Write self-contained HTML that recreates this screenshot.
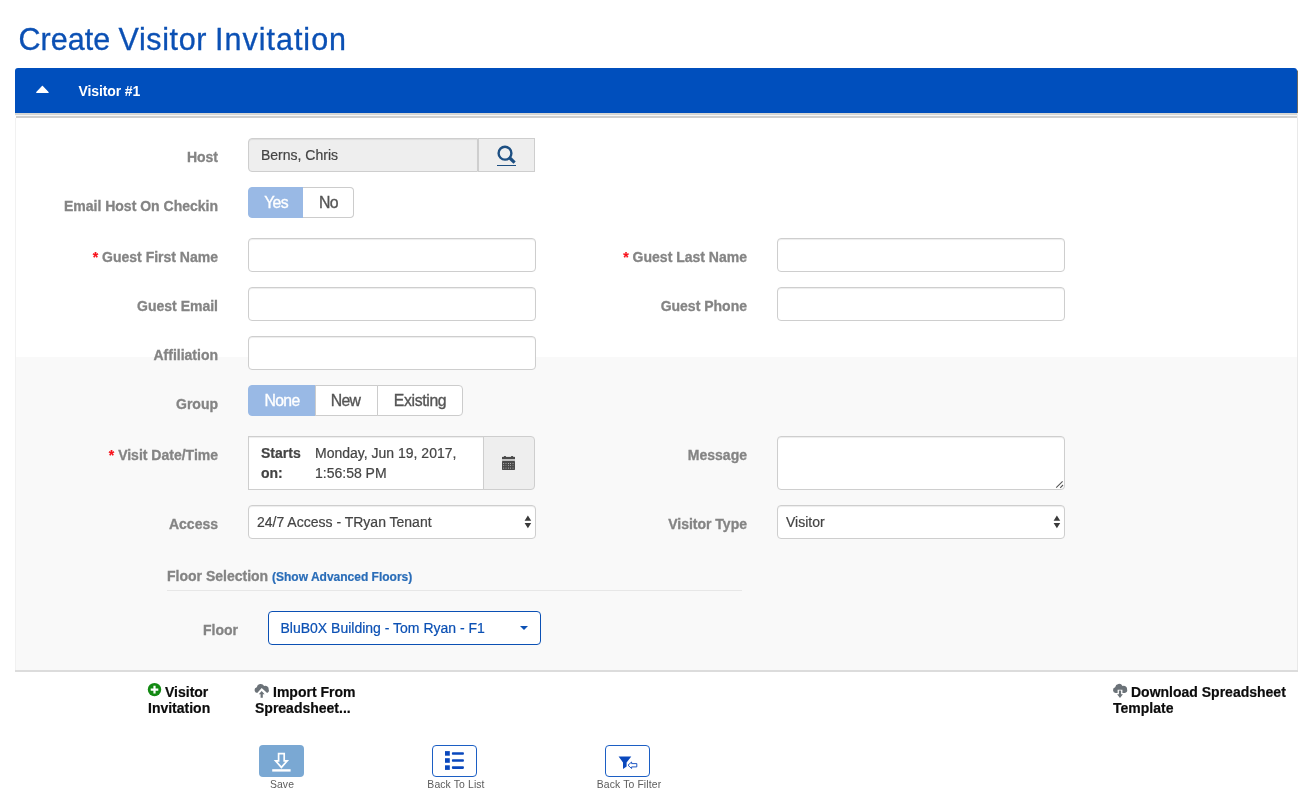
<!DOCTYPE html>
<html>
<head>
<meta charset="utf-8">
<title>Create Visitor Invitation</title>
<style>
*{box-sizing:border-box;margin:0;padding:0}
html,body{width:1298px;height:795px;overflow:hidden;background:#fff}
body{font-family:"Liberation Sans",sans-serif;font-size:14px;color:#333;position:relative}
.abs{position:absolute}
h1{position:absolute;left:18.4px;top:18.7px;font-size:30.5px;-webkit-text-stroke:0.3px #0b50b4;font-weight:normal;color:#0b50b4;line-height:40px;white-space:nowrap;letter-spacing:0.75px}
.hdr{position:absolute;left:15px;top:68px;width:1282px;height:45px;background:#004fbd;border-radius:3px 3px 0 0}
.hdr .t{position:absolute;left:63.5px;top:15px;font-size:14px;font-weight:bold;color:#fff;line-height:16px;letter-spacing:-0.12px}
.panel{position:absolute;left:15px;top:118px;width:1283px;height:552px;background:#fff;border-left:1px solid #f1f1f1;border-right:1px solid #e9e9e9}
.gray{position:absolute;left:16px;top:357px;width:1281px;height:313px;background:#f9f9f9}
.pb{position:absolute;left:15px;top:670px;width:1283px;height:2px;background:#dcdcdc}
.lbl{position:absolute;font-weight:bold;font-size:14px;color:#848484;-webkit-text-stroke:0.3px #848484;text-align:right;line-height:16px;white-space:nowrap}
.lbl i{color:#f8121c;-webkit-text-stroke:0.2px #f8121c;font-style:normal}
.inp{position:absolute;height:34px;background:#fff;border:1px solid #cecece;border-radius:4px;box-shadow:inset 0 1px 1px rgba(0,0,0,.075)}
.txt{position:absolute;font-size:14px;color:#444;-webkit-text-stroke:0.2px currentColor;line-height:16px;white-space:nowrap}

.btn{position:absolute;height:31px;border:1px solid #ccc;background:#fff;font-size:15.8px;color:#555;text-align:center;line-height:29px;letter-spacing:-0.7px;-webkit-text-stroke:0.35px currentColor}
.btn.on{background:#99b9e5;border-color:#99b9e5;color:#fff}
.blk{position:absolute;font-weight:bold;font-size:14px;color:#0c0c0c;-webkit-text-stroke:0.2px #0c0c0c;line-height:16px;white-space:nowrap}
.cap{position:absolute;font-size:10.4px;letter-spacing:0.12px;color:#5c5c5c;line-height:12px;text-align:center;white-space:nowrap;width:100px}
.tb{position:absolute;top:745px;width:45px;height:32px;border-radius:4px}
.tb.o{border:1.4px solid #1c5fc4;background:#fff}
svg{position:absolute;overflow:visible}
h1 span{position:absolute;top:0}
</style>
</head>
<body>
<div id="w" style="position:absolute;left:0;top:0;width:1298px;height:795px;will-change:transform">
<h1><span style="left:0px;letter-spacing:0.05px">Create</span><span style="left:100.2px;letter-spacing:0.6px">Visitor</span><span style="left:196.6px;letter-spacing:1.0px">Invitation</span></h1>
<div class="hdr"><svg style="left:0;top:0" width="60" height="45" viewBox="15 68 60 45"><path d="M36.7 92.4 L48.1 92.4 L42.4 86.3 Z" fill="#fff" stroke="#fff" stroke-width="1.2" stroke-linejoin="round"/></svg><div class="t">Visitor #1</div></div>
<svg style="left:0;top:0" width="1298" height="120" viewBox="0 0 1298 120"><rect x="15" y="113" width="1282" height="2" fill="#d6d6d3"/><rect x="15" y="115" width="1282" height="1" fill="#f7f7f7"/><rect x="16" y="116" width="1281" height="2" fill="#cecece"/><rect x="1297" y="70.5" width="1" height="42.5" fill="#6e695f"/><rect x="1297" y="113" width="1" height="5" fill="#eee"/></svg>
<div class="panel"></div>
<div class="gray"></div>
<div class="pb"></div>

<!-- labels left -->
<div class="lbl" style="right:1080px;top:149px">Host</div>
<div class="lbl" style="right:1080px;top:198px">Email Host On Checkin</div>
<div class="lbl" style="right:1080px;top:249px"><i>*</i> Guest First Name</div>
<div class="lbl" style="right:1080px;top:298px">Guest Email</div>
<div class="lbl" style="right:1080px;top:347px">Affiliation</div>
<div class="lbl" style="right:1080px;top:396px">Group</div>
<div class="lbl" style="right:1080px;top:447px"><i>*</i> Visit Date/Time</div>
<div class="lbl" style="right:1080px;top:516px">Access</div>
<!-- labels right -->
<div class="lbl" style="right:551px;top:249px"><i>*</i> Guest Last Name</div>
<div class="lbl" style="right:551px;top:298px">Guest Phone</div>
<div class="lbl" style="right:551px;top:447px">Message</div>
<div class="lbl" style="right:551px;top:516px">Visitor Type</div>

<!-- host -->
<div class="inp" style="left:248px;top:138px;width:230px;background:#eee;border-radius:4px 0 0 4px"></div>
<div class="txt" style="left:261px;top:147px">Berns, Chris</div>
<div class="inp" style="left:478px;top:138px;width:57px;background:#eee;border-radius:0;box-shadow:none"></div>

<!-- inputs -->
<div class="inp" style="left:248px;top:238px;width:288px"></div>
<div class="inp" style="left:777px;top:238px;width:288px"></div>
<div class="inp" style="left:248px;top:287px;width:288px"></div>
<div class="inp" style="left:777px;top:287px;width:288px"></div>
<div class="inp" style="left:248px;top:336px;width:288px"></div>
<div class="inp" style="left:777px;top:436px;width:288px;height:54px"></div>
<div class="inp" style="left:248px;top:505px;width:288px"></div>
<div class="txt" style="left:257px;top:514px">24/7 Access - TRyan Tenant</div>
<div class="inp" style="left:777px;top:505px;width:288px"></div>
<div class="txt" style="left:786px;top:514px">Visitor</div>

<!-- search icon -->
<svg style="left:495px;top:143px" width="24" height="26" viewBox="495 143 24 26"><circle cx="505" cy="153.2" r="6.4" fill="none" stroke="#1d4f82" stroke-width="2.4"/><line x1="509.8" y1="158" x2="514.6" y2="162.6" stroke="#1d4f82" stroke-width="3.2" stroke-linecap="butt"/><rect x="497" y="165" width="19" height="1" fill="#1d4f82"/></svg>

<!-- yes/no -->
<div class="btn on" style="left:248px;top:187px;width:56px;border-radius:4px 0 0 4px">Yes</div>
<div class="btn" style="left:303px;top:187px;width:51px;border-radius:0 4px 4px 0;border-left:none;text-indent:1px">No</div>

<!-- group -->
<div class="btn on" style="left:248px;top:385px;width:68px;border-radius:4px 0 0 4px">None</div>
<div class="btn" style="left:315px;top:385px;width:63px;border-radius:0;text-indent:-2px">New</div>
<div class="btn" style="left:377px;top:385px;width:86px;border-radius:0 4px 4px 0;letter-spacing:-0.35px">Existing</div>

<!-- visit date/time -->
<div class="inp" style="left:248px;top:436px;width:236px;height:54px;border-radius:0"></div>
<div class="inp" style="left:483px;top:436px;width:52px;height:54px;background:#eee;border-radius:0 4px 4px 0;box-shadow:none"></div>
<div class="txt" style="left:261px;top:443px;font-weight:bold;line-height:20px;color:#444">Starts<br>on:</div>
<div class="txt" style="left:315px;top:443px;line-height:20px;color:#444">Monday, Jun 19, 2017,<br>1:56:58 PM</div>
<svg style="left:502px;top:455px" width="13" height="15" viewBox="0 0 13 15"><rect x="1.7" y="0.9" width="2.4" height="2.2" rx="1" fill="#4a4a4a"/><rect x="8.9" y="0.9" width="2.4" height="2.2" rx="1" fill="#4a4a4a"/><rect x="0" y="1.9" width="13" height="2.3" fill="#4a4a4a"/><rect x="0" y="4.2" width="13" height="1.8" fill="#c2c2c2"/><rect x="0" y="6" width="13" height="8.9" rx="0.6" fill="#4a4a4a"/><g fill="#eee"><rect x="1.3" y="8" width=".8" height=".8"/><rect x="3" y="8" width="2" height=".8" opacity=".35"/><rect x="6.1" y="8" width=".8" height=".8"/><rect x="8.1" y="8" width=".8" height=".8"/><rect x="10" y="8" width="2" height=".8" opacity=".35"/><rect x="1.3" y="10.1" width=".8" height=".8" opacity=".8"/><rect x="3" y="10.1" width="2" height=".8" opacity=".2"/><rect x="6.1" y="10.1" width=".8" height=".8" opacity=".8"/><rect x="8.1" y="10.1" width=".8" height=".8" opacity=".8"/><rect x="10" y="10.1" width="2" height=".8" opacity=".2"/><rect x="1.3" y="12.7" width=".8" height=".8"/><rect x="3" y="12.7" width="2" height=".8" opacity=".35"/><rect x="6.1" y="12.7" width=".8" height=".8"/><rect x="8.1" y="12.7" width=".8" height=".8"/><rect x="10" y="12.7" width="2" height=".8" opacity=".35"/></g></svg>

<!-- textarea grip -->
<svg style="left:1054px;top:479px" width="11" height="11" viewBox="1054 479 11 11"><path d="M1056.2 487.6 L1062.6 481.4 M1060.2 487.8 L1063 485" stroke="#555" stroke-width="1.1" fill="none"/></svg>

<!-- select arrows -->
<svg style="left:524px;top:515px" width="8" height="14" viewBox="0 0 8 14"><path d="M0.6 5.7 L3.9 0.6 L7.2 5.7 Z M0.6 8.1 L3.9 13.2 L7.2 8.1 Z" fill="#3a3a3a"/></svg>
<svg style="left:1053px;top:515px" width="8" height="14" viewBox="0 0 8 14"><path d="M0.6 5.7 L3.9 0.6 L7.2 5.7 Z M0.6 8.1 L3.9 13.2 L7.2 8.1 Z" fill="#3a3a3a"/></svg>

<!-- floor selection -->
<div class="lbl" style="left:167px;top:568px;text-align:left">Floor Selection <span style="font-size:12px;color:#2a6db8;-webkit-text-stroke:0.2px #2a6db8">(Show Advanced Floors)</span></div>
<div class="abs" style="left:167px;top:590px;width:575px;height:1px;background:#e7e7e7"></div>
<div class="lbl" style="right:1060px;top:622px">Floor</div>
<div class="abs" style="left:268px;top:611px;width:273px;height:34px;border:1px solid #0b50b4;border-radius:4px;background:#fff"></div>
<div class="txt" style="left:280.5px;top:620px;color:#0b50b4">BluB0X Building - Tom Ryan - F1</div>
<div class="abs" style="left:520px;top:626px;width:0;height:0;border-left:4px solid transparent;border-right:4px solid transparent;border-top:4px solid #0b50b4"></div>

<!-- bottom links -->
<svg style="left:147px;top:682px" width="15" height="15" viewBox="0 0 15 15"><circle cx="7.5" cy="7.6" r="6.7" fill="#138a13"/><path d="M6.4 3.8h2.2v2.7h2.7v2.2H8.6v2.7H6.4V8.7H3.7V6.5h2.7z" fill="#fff"/></svg>
<div class="blk" style="left:148px;top:684px"><span style="margin-left:17px">Visitor</span><br>Invitation</div>

<svg style="left:254px;top:683px" width="16" height="16" viewBox="0 0 16 16"><path d="M3.2 10 a2.9 2.9 0 0 1 -0.4 -5.7 a3.9 3.9 0 0 1 7.3 -1.3 a3.4 3.4 0 0 1 4.6 3.6 a2.6 2.6 0 0 1 -1.6 3.4 L7.7 4.9 Z" fill="#6b7278"/><path d="M7.7 7.9 L10.6 11.2 H8.8 V14.8 H6.6 V11.2 H4.8 Z" fill="#6b7278"/></svg>
<div class="blk" style="left:255px;top:684px"><span style="margin-left:18px">Import From</span><br>Spreadsheet...</div>

<svg style="left:1112px;top:683px" width="16" height="16" viewBox="0 0 16 16"><path d="M3.6 9.9 a2.9 2.9 0 0 1 -0.4 -5.7 a3.9 3.9 0 0 1 7.3 -1.3 a3.4 3.4 0 0 1 4.6 3.6 a2.5 2.5 0 0 1 -2.3 3.4 H10.4 V6.8 H5.6 V9.9 Z" fill="#6b7278"/><path d="M6.9 7.6 H9.1 V11.2 H10.9 L8 14.9 L5.1 11.2 H6.9 Z" fill="#6b7278"/></svg>
<div class="blk" style="left:1113px;top:684px"><span style="margin-left:18px">Download Spreadsheet</span><br>Template</div>

<!-- toolbar -->
<div class="tb" style="left:259px;background:#7aa8d3"></div>
<svg style="left:270px;top:751px" width="24" height="22" viewBox="270 751 24 22"><path d="M278.6 753.6 H284.2 V760.8 H287.2 L281.4 767.4 L275.6 760.8 H278.6 Z" fill="none" stroke="#fff" stroke-width="1.7"/><rect x="272.2" y="769.2" width="18.4" height="2.4" fill="#fff"/></svg>
<div class="cap" style="left:232px;top:778.6px">Save</div>

<div class="tb o" style="left:432px"></div>
<svg style="left:444px;top:750px" width="22" height="21" viewBox="444 750 22 21"><g fill="#0a48bd"><rect x="445" y="751.1" width="4.8" height="4.6"/><rect x="445" y="758.2" width="4.8" height="4.6"/><rect x="445" y="765.3" width="4.8" height="4.6"/><rect x="451.9" y="752.2" width="12" height="2.6" rx="0.8"/><rect x="451.9" y="759.2" width="12" height="2.6" rx="0.8"/><rect x="451.9" y="766.3" width="12" height="2.6" rx="0.8"/></g></svg>
<div class="cap" style="left:406px;top:778.6px">Back To List</div>

<div class="tb o" style="left:605px"></div>
<svg style="left:617px;top:755px" width="22" height="16" viewBox="617 755 22 16"><path d="M618.6 756.5 H631.3 L626.6 762.6 V766.6 L623 768.9 V762.6 Z" fill="#0a48bd"/><path d="M628 765.2 L631.6 762 V763.6 H636.8 V766.9 H631.6 V768.5 Z" fill="#fff" stroke="#0a48bd" stroke-width="0.9"/></svg>
<div class="cap" style="left:579px;top:778.6px">Back To Filter</div>

</div>
</body>
</html>
